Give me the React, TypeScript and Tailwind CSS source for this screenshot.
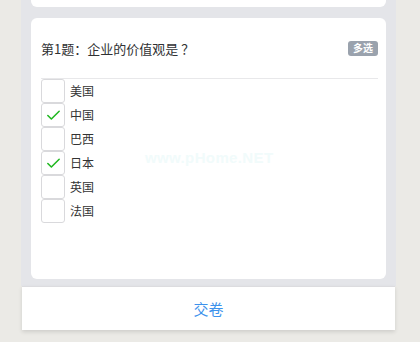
import { Check } from 'lucide-react'

const options = [
  { label: '美国', checked: false },
  { label: '中国', checked: true },
  { label: '巴西', checked: false },
  { label: '日本', checked: true },
  { label: '英国', checked: false },
  { label: '法国', checked: false },
]

export default function App() {
  return (
    <div
      className="relative h-[342px] w-[420px] overflow-hidden bg-[#ebeae6]"
      style={{ fontFamily: '"Noto Sans CJK SC", "Noto Sans", sans-serif' }}
    >
      {/* Page column */}
      <div className="ml-[21px] flex h-[286px] w-[375px] flex-col bg-[#e4e5e9] px-[10px]">
        {/* Previous card (cut off) */}
        <div className="h-[7px] shrink-0 rounded-b-[6px] bg-white" />

        {/* Question card */}
        <div className="relative mt-[11px] h-[261px] shrink-0 rounded-[6px] bg-white pl-[10px] pr-[8px] pt-[20px]">
          <div className="flex h-[20px] items-center justify-between">
            <span className="text-[13px] leading-none text-[#303133]">第1题：企业的价值观是 ？</span>
            <span className="flex h-[15px] w-[30px] items-center justify-center rounded-[3px] bg-[#9aa2ad] text-[10px] font-bold leading-none text-white">
              多选
            </span>
          </div>
          <div className="mt-[20px] border-t border-[#e8e8ea]" />
          <div className="flex flex-col">
            {options.map((o) => (
              <div key={o.label} className="flex h-[24px] items-center gap-[5px]">
                <div className="flex h-[24px] w-[24px] items-center justify-center rounded-[3px] border border-[#d9d9dc] bg-white">
                  {o.checked && <Check className="h-[17px] w-[17px] text-[#20b820]" strokeWidth={2.2} />}
                </div>
                <span className="text-[12px] leading-none text-[#333]">{o.label}</span>
              </div>
            ))}
          </div>
          <span
            className="absolute left-[114px] top-[132px] text-[15px] font-bold leading-none tracking-wide text-[#f1fbfb]"
            style={{ fontFamily: '"Liberation Sans", sans-serif' }}
          >
            www.pHome.NET
          </span>
        </div>
      </div>

      {/* Footer */}
      <div className="ml-[22px] flex h-[44px] w-[373px] items-center justify-center border-t border-[#dcdcdf] bg-white shadow-[0_2px_4px_rgba(0,0,0,0.12)]">
        <span className="text-[15px] leading-none text-[#3d92ec]">交卷</span>
      </div>
    </div>
  )
}
